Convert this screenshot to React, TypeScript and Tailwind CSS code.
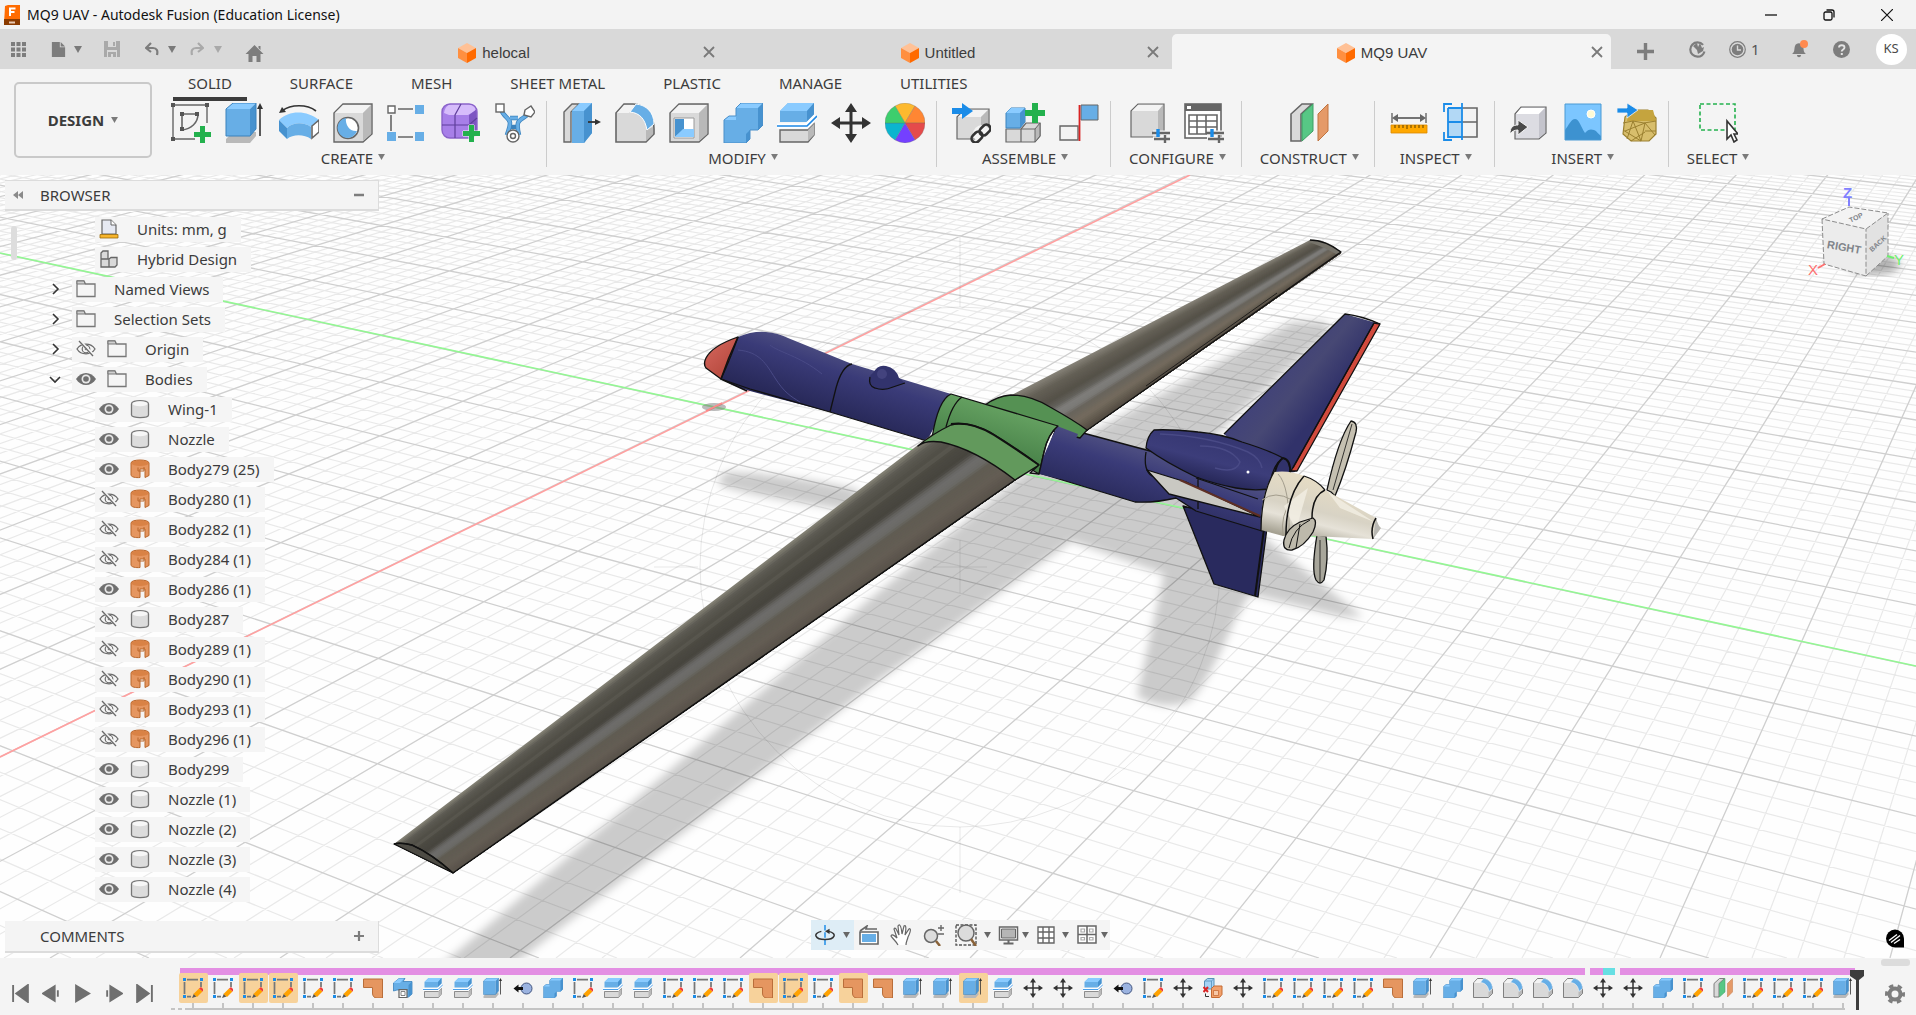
import { ReactNode, useState } from 'react';
import { clsx } from 'clsx';

interface IconProps {
  className?: string;
}

const BLUE = '#67aee6';
const BLUE_LIGHT = '#8acbff';
const BLUE_DARK = '#4792cf';
const GREY = '#d9d9d9';
const GREY_LIGHT = '#f3f3f3';
const GREY_DARK = '#b9b9b9';
const LINE = '#666666';

const Svg = ({ className, size = 40, children }: { className?: string; size?: number; children: ReactNode }) => (
  <svg viewBox={`0 0 ${size} ${size}`} className={clsx('shrink-0', className)} fill="none" aria-hidden="true">
    {children}
  </svg>
);

const Caret = ({ className = 'h-[7px] w-[8px] text-[#7a7a7a]' }: IconProps) => (
  <svg viewBox="0 0 8 7" className={clsx('shrink-0', className)} aria-hidden="true">
    <path d="M0 0H8L4 7Z" fill="currentColor" />
  </svg>
);

/* ---------- tool icons ---------- */

const Plus = ({ x, y }: { x: number; y: number }) => (
  <path
    transform={`translate(${x} ${y})`}
    d="M6 0h5v6h6v5h-6v6H6v-6H0V6h6z"
    fill="#23b14d"
    stroke="#f4f4f4"
    strokeWidth="1"
    paintOrder="stroke"
  />
);

const SketchIcon = ({ className }: IconProps) => (
  <Svg className={className}>
    <path d="M2 2H36M2 2V36M2 36H24M36 2V20" stroke={LINE} strokeWidth="1.4" />
    <path d="M11 11V26M11 11H27C27 20 20 26 11 27" stroke={LINE} strokeWidth="1.6" />
    <path d="M0 0h4v4H0zM34 0h4v4h-4zM0 34h4v4H0zM9 9h4v4H9zM24 9h4v4h-4zM9 24h4v4H9z" fill="#555" />
    <Plus x={23} y={23} />
  </Svg>
);

const ExtrudeIcon = ({ className }: IconProps) => (
  <Svg className={className}>
    <path d="M1 36L8 29H31V33L25 40H1Z" fill={GREY_DARK} />
    <path d="M1 6L8 0H31L25 6Z" fill={BLUE_LIGHT} />
    <path d="M1 6H25V33H1Z" fill={BLUE} />
    <path d="M25 6L31 0V26L25 33Z" fill={BLUE_DARK} />
    <path d="M1 6L8 0H31V26L25 33H1Z" stroke="#3b82bd" strokeWidth="1" />
    <path d="M35 33V4" stroke="#333" strokeWidth="1.6" />
    <path d="M35 0L38 6H32Z" fill="#333" />
  </Svg>
);

const RevolveIcon = ({ className }: IconProps) => (
  <Svg className={className}>
    <path d="M0 17C10 7 28 7 40 17L32 24C25 19 14 19 8 25Z" fill={BLUE_LIGHT} />
    <path d="M0 17L8 25V36L0 28Z" fill={BLUE_DARK} />
    <path d="M8 25C14 19 25 19 32 24V36C25 31 14 31 8 36Z" fill={BLUE} />
    <path d="M40 17L33 23V35L40 29Z" fill="#fff" stroke={LINE} strokeWidth="1.6" />
    <path d="M3 8C12 1 28 1 37 8" stroke="#333" strokeWidth="1.6" />
    <path d="M0 10L3 4L7 9Z" fill="#333" />
  </Svg>
);

const Cube = () => (
  <>
    <path d="M1 10L10 1H39V31L30 39H1Z" fill={GREY} stroke={LINE} strokeWidth="1.4" />
    <path d="M2 10L10 2H38L30 10Z" fill={GREY_LIGHT} />
    <path d="M30 10L38 2V31L30 38Z" fill={GREY_DARK} />
  </>
);

const HoleIcon = ({ className }: IconProps) => (
  <Svg className={className}>
    <Cube />
    <circle cx="15" cy="25" r="10.5" fill="#fff" stroke={LINE} strokeWidth="1.6" />
    <path d="M13 15A10 10 0 1 0 24 28C17 29 12 22 13 15Z" fill={BLUE} />
  </Svg>
);

const PatternIcon = ({ className }: IconProps) => (
  <Svg className={className}>
    <path d="M11 6H26M4 12V28M11 34H26" stroke={LINE} strokeWidth="1.6" />
    <path d="M1 3H8V10H1Z" fill="#fff" stroke={LINE} strokeWidth="1.4" />
    <path d="M28 2h9v9h-9zM0 29h9v9H0zM28 29h9v9h-9z" fill={BLUE} />
  </Svg>
);

const FormIcon = ({ className }: IconProps) => (
  <Svg className={className}>
    <rect x="1" y="1" width="35" height="34" rx="8" fill="#a77fe8" />
    <path d="M3 10C4 3 8 1 12 1H30C34 1 36 4 34 8L27 12H8Z" fill="#d6bcfb" />
    <path d="M28 12L36 6V26C36 30 32 33 28 34Z" fill="#7d55c2" />
    <rect x="1" y="1" width="35" height="34" rx="8" stroke="#8a63c9" strokeWidth="1.4" />
    <path d="M1 22H28L36 15M14 35V12L20 1" stroke="#5f3f9c" strokeWidth="1.2" />
    <Plus x={22} y={22} />
  </Svg>
);

const DeriveIcon = ({ className }: IconProps) => (
  <Svg className={className}>
    <path d="M6 6C8 14 15 15 15 20S13 28 12 32M24 32C23 28 22 24 23 20S30 15 34 10M15 15H23M14 24L23 24" stroke="#3b82bd" strokeWidth="4.500" />
    <path d="M6 6C8 14 15 15 15 20S13 28 12 32M24 32C23 28 22 24 23 20S30 15 34 10M15 15H23" stroke={BLUE} strokeWidth="3" />
    <rect x="1" y="1" width="8" height="8" fill="#fff" stroke={LINE} strokeWidth="1.4" />
    <path d="M30 7L36 3L40 9L36 14L29 12Z" fill="#fff" stroke={LINE} strokeWidth="1.4" />
    <circle cx="18" cy="33" r="6" fill="#fff" stroke={LINE} strokeWidth="1.4" />
    <circle cx="18" cy="33" r="2.5" stroke={LINE} strokeWidth="1.4" />
  </Svg>
);

const PressPullIcon = ({ className }: IconProps) => (
  <Svg className={className}>
    <path d="M3 9L11 1H18L10 9V39H3Z" fill={GREY} stroke={LINE} strokeWidth="1.4" />
    <path d="M11 8L19 0H31V30L23 40H11Z" fill={BLUE} />
    <path d="M11 8L19 0H31L23 8Z" fill={BLUE_LIGHT} />
    <path d="M23 8L31 0V30L23 40Z" fill={BLUE_DARK} />
    <path d="M27 19H36" stroke="#333" strokeWidth="1.8" />
    <path d="M34 16L40 19L34 22Z" fill="#333" />
  </Svg>
);

const FilletIcon = ({ className }: IconProps) => (
  <Svg className={className}>
    <path d="M1 10L9 1H18C31 1 39 12 39 26V31L31 39H1Z" fill={GREY} stroke={LINE} strokeWidth="1.6" />
    <path d="M2 10L9 2H20L14 10Z" fill={GREY_LIGHT} />
    <path d="M31 27L38 24V31L31 38Z" fill={GREY_DARK} />
    <path d="M15 9L21 1C31 2 39 9 39 21L32 27C30 16 25 10 15 9Z" fill={BLUE} stroke="#fff" strokeWidth="1" />
  </Svg>
);

const ShellIcon = ({ className }: IconProps) => (
  <Svg className={className}>
    <Cube />
    <path d="M5 15H25V35H5Z" fill="#fff" stroke="#999" strokeWidth="1" />
    <path d="M6 16H15V26L6 34Z" fill={BLUE_DARK} />
    <path d="M6 34L14 26H25V34Z" fill={BLUE_LIGHT} />
  </Svg>
);

const CombineIcon = ({ className }: IconProps) => (
  <Svg className={className}>
    <path d="M1 17L6 13H13V5L18 0H40V22L35 27H27V36L23 40H1Z" fill={BLUE} />
    <path d="M13 5L18 0H40L35 5ZM1 17L6 13H13V17Z" fill={BLUE_LIGHT} />
    <path d="M35 5L40 0V22L35 27ZM23 31L27 27V36L23 40Z" fill={BLUE_DARK} />
    <path d="M1 17L6 13H13V5L18 0H40V22L35 27H27V36L23 40H1Z" stroke="#4a8fc9" strokeWidth="1" />
  </Svg>
);

const SplitIcon = ({ className }: IconProps) => (
  <Svg className={className}>
    <path d="M3 27H31L37 21V32L31 39H3Z" fill={GREY} stroke={LINE} strokeWidth="1.4" />
    <path d="M31 27L37 21V32L31 38Z" fill={GREY_DARK} />
    <path d="M3 8L11 0H37V12L30 19H3Z" fill={BLUE} />
    <path d="M3 8L11 0H37L30 8Z" fill={BLUE_LIGHT} />
    <path d="M30 8L37 0V12L30 19Z" fill={BLUE_DARK} />
    <path d="M0 23H29L39 13" stroke="#fff" strokeWidth="5" />
    <path d="M0 23H30L40 13" stroke="#1e88e5" strokeWidth="1.6" />
  </Svg>
);

const MoveIcon = ({ className }: IconProps) => (
  <Svg className={className}>
    <path d="M20 5V35M5 20H35" stroke="#333" strokeWidth="3" />
    <path d="M20 0L26 9H14ZM20 40L14 31H26ZM0 20L9 14V26ZM40 20L31 26V14Z" fill="#333" />
  </Svg>
);

const WHEEL = [
  { d: 'M20 20L10 3A20 20 0 0 1 30 3Z', fill: '#fdb92e' },
  { d: 'M20 20L30 3A20 20 0 0 1 40 20Z', fill: '#ff8633' },
  { d: 'M20 20H40A20 20 0 0 1 30 37Z', fill: '#e54b4b' },
  { d: 'M20 20L30 37A20 20 0 0 1 10 37Z', fill: '#7440ff' },
  { d: 'M20 20L10 37A20 20 0 0 1 0 20Z', fill: '#0bb5cf' },
  { d: 'M20 20H0A20 20 0 0 1 10 3Z', fill: '#3dce6d' },
];

const AppearanceIcon = ({ className }: IconProps) => (
  <Svg className={className}>
    {WHEEL.map((slice) => (
      <path key={slice.d} d={slice.d} fill={slice.fill} stroke="#666" strokeOpacity="0.35" strokeWidth="0.8" />
    ))}
  </Svg>
);

const InsertLinkIcon = ({ className }: IconProps) => (
  <Svg className={className}>
    <path d="M6 14L14 6H38V28L30 36H6Z" fill={GREY} stroke={LINE} strokeWidth="1.2" />
    <path d="M7 14L14 7H37L30 14Z" fill={GREY_LIGHT} />
    <path d="M30 14L37 7V28L30 35Z" fill={GREY_DARK} />
    <path d="M1 5H11V0L22 8L11 16V11H1Z" fill="#1b8ce8" />
    <circle cx="31" cy="31" r="9" fill="#f4f4f4" />
    <g stroke="#333" strokeWidth="2.6">
      <rect x="20" y="30" width="12" height="8" rx="4" transform="rotate(-45 26 34)" />
      <rect x="28" y="23" width="12" height="8" rx="4" transform="rotate(-45 34 27)" />
    </g>
  </Svg>
);

const NewComponentIcon = ({ className }: IconProps) => (
  <Svg className={className}>
    <path d="M1 26H16V39H1ZM16 26L21 20H35V33L30 39H16Z" fill={GREY} stroke={LINE} strokeWidth="1.2" />
    <path d="M30 26L35 20V33L30 39ZM16 26H30" fill={GREY_DARK} stroke={LINE} strokeWidth="1" />
    <path d="M1 10L6 5H20V19L15 25H1Z" fill={BLUE} stroke="#3b82bd" strokeWidth="1" />
    <path d="M1 10L6 5H20L15 10Z" fill={BLUE_LIGHT} />
    <path d="M15 10L20 5V19L15 25Z" fill={BLUE_DARK} />
    <path d="M27 0h6v7h7v6h-7v7h-6v-7h-7V7h7z" fill="#23b14d" />
  </Svg>
);

const JointIcon = ({ className }: IconProps) => (
  <Svg className={className}>
    <path d="M1 23H19V37H1Z" fill={GREY_LIGHT} stroke={LINE} strokeWidth="1.4" />
    <path d="M22 2H39V17H22Z" fill={BLUE} stroke={LINE} strokeWidth="1" />
    <path d="M20.5 2V38" stroke="#d92323" strokeWidth="1.8" />
  </Svg>
);

const Sliders = () => (
  <>
    <path d="M23 30H40M23 36H40" stroke="#f4f4f4" strokeWidth="5" />
    <path d="M22 30H40M24 36H40" stroke={LINE} strokeWidth="2.4" />
    <path d="M28 26V34" stroke="#1b8ce8" strokeWidth="3.4" />
    <path d="M35 32V40" stroke={LINE} strokeWidth="2.4" />
  </>
);

const ConfigureIcon = ({ className }: IconProps) => (
  <Svg className={className}>
    <path d="M1 8L8 1H34V28L28 34H1Z" fill={GREY} stroke={LINE} strokeWidth="1.2" />
    <path d="M2 8L8 2H33L28 8Z" fill={GREY_LIGHT} />
    <path d="M28 8L33 2V28L28 33Z" fill={GREY_DARK} />
    <Sliders />
  </Svg>
);

const ConfigTableIcon = ({ className }: IconProps) => (
  <Svg className={className}>
    <rect x="1" y="1" width="36" height="34" fill="#fff" stroke={LINE} strokeWidth="1.6" />
    <path d="M1 1H37V8H1Z" fill={LINE} />
    <path d="M3 3h4v3H3z" fill="#fff" />
    <path d="M5 12H33V31H5ZM5 18H33M5 24H33M13 12V31M22 12V31" stroke={LINE} strokeWidth="1.6" />
    <Sliders />
  </Svg>
);

const PlaneIcon = ({ className }: IconProps) => (
  <Svg className={className}>
    <path d="M2 11L13 1H23L12 11V38H2Z" fill={GREY} stroke={LINE} strokeWidth="1.6" />
    <path d="M13 11L24 1V28L13 38Z" fill="#57c785" stroke="#3c9e62" strokeWidth="1" />
    <path d="M29 11L39 1V28L29 38Z" fill="#e59a68" stroke="#c07440" strokeWidth="1" />
  </Svg>
);

const MeasureIcon = ({ className }: IconProps) => (
  <Svg className={className}>
    <path d="M3 10V20M37 10V20" stroke={LINE} strokeWidth="1.4" />
    <path d="M7 15H33" stroke={LINE} strokeWidth="1.8" />
    <path d="M3 15L9 11V19ZM37 15L31 19V11Z" fill={LINE} />
    <path d="M2 22H38V30H2Z" fill="#ffa800" stroke="#d98900" strokeWidth="0.8" />
    <path d="M6 22v3M10 22v3M14 22v3M18 22v4M22 22v3M26 22v3M30 22v3M34 22v3" stroke="#7a5200" strokeWidth="1.2" />
  </Svg>
);

const SectionIcon = ({ className }: IconProps) => (
  <Svg className={className}>
    <path d="M5 5H19V34H5Z" fill="#b2d8f5" />
    <path d="M19 5H34V34H19M19 19H34" fill={GREY_LIGHT} stroke={LINE} strokeWidth="1.6" />
    <path d="M19 0V37M1 9V1H9M1 29V37H9M5 5H19M5 5V34H19M5 19H19" stroke="#1b8ce8" strokeWidth="1.8" />
  </Svg>
);

const InsertDerivedIcon = ({ className }: IconProps) => (
  <Svg className={className}>
    <path d="M6 11L12 4H37V30L30 36H6Z" fill="#dcdce2" stroke={LINE} strokeWidth="1.2" />
    <path d="M7 11L12 5H36L30 11Z" fill="#ffffff" />
    <path d="M30 11L36 5V30L30 35Z" fill="#c4c4cc" />
    <path d="M1 31C1 24 4 22 9 22V17L19 24L9 32V27C6 27 3 28 1 31Z" fill="#4a4a4a" stroke="#f4f4f4" strokeWidth="1" />
  </Svg>
);

const CanvasIcon = ({ className }: IconProps) => (
  <Svg className={className}>
    <path d="M2 1H38V37H2Z" fill="#7cc6ff" />
    <circle cx="28" cy="11" r="4" fill="#fffbd6" stroke="#fff" />
    <path d="M2 27C6 22 8 16 12 16S18 24 22 30C25 26 28 26 31 27S35 31 38 33V37H2Z" fill="#3d92d0" />
    <path d="M2 1H38V37H2Z" stroke="#4a9ad4" strokeWidth="1" />
  </Svg>
);

const MeshInsertIcon = ({ className }: IconProps) => (
  <Svg className={className}>
    <path d="M8 14L16 7H31L39 15V31L32 38H14L6 31Z" fill="#d8be6c" stroke="#9b8030" strokeWidth="1.2" />
    <path d="M12 7H36L39 18H10Z" fill="#c5a43e" />
    <path d="M6 20L16 18L27 20L39 18M16 18L10 36M16 18L24 38L28 20L38 32M6 27L24 38M8 28L28 20M28 28H39M14 38L28 29" stroke="#9b8030" strokeWidth="1" />
    <path d="M0 5H10V0L21 7L10 15V10H0Z" fill="#1b8ce8" stroke="#f4f4f4" strokeWidth="0.8" />
  </Svg>
);

const SelectIcon = ({ className }: IconProps) => (
  <Svg className={className}>
    <rect x="2" y="1" width="35" height="26" stroke="#23b14d" strokeWidth="1.6" strokeDasharray="4 2.5" />
    <path d="M29 18V36L33 32L36 39L39 37L36 31H40Z" fill="#fff" stroke="#333" strokeWidth="1.6" />
  </Svg>
);

/* ---------- timeline icons ---------- */

const SketchPencilIcon = ({ className }: IconProps) => (
  <Svg className={className}>
    <path d="M8 3H30M3 8V32M8 37H16M36 8V18" stroke="#777" strokeWidth="3.5" />
    <path d="M0 0h6v6H0zM34 0h6v6h-6zM0 34h6v6H0z" fill="#1b8ce8" />
    <path d="M18 40L22 31L27 37Z" fill="#555" />
    <path d="M21 32L32 21L39 27L28 38Z" fill="#ffa200" />
    <path d="M32 21L36 18L42 24L39 27Z" fill="#f23b3b" />
  </Svg>
);

const PatchIcon = ({ className }: IconProps) => (
  <Svg className={className}>
    <path d="M1 2H39V40H28C22 40 19 36 19 30V19H1Z" fill="#e59660" stroke="#b96e3a" strokeWidth="2" />
  </Svg>
);

const IntersectIcon = ({ className }: IconProps) => (
  <Svg className={className}>
    <path d="M1 10L12 1H24L20 7H38V32L31 38H20V24H8L1 26Z" fill={BLUE} stroke="#3b82bd" strokeWidth="1.6" />
    <path d="M1 10L12 1H22L14 10Z" fill={BLUE_LIGHT} />
    <path d="M31 14L38 7V32L31 38Z" fill={BLUE_DARK} />
    <path d="M12 23H28V39H12Z" fill="#fff" stroke={LINE} strokeWidth="2.5" />
    <path d="M16 27H24V35H16Z" stroke={LINE} strokeWidth="1.6" />
  </Svg>
);

const AlignIcon = ({ className }: IconProps) => (
  <Svg className={className}>
    <circle cx="27" cy="21" r="11" fill="#9bb3e0" stroke="#43557f" strokeWidth="2" />
    <path d="M1 21L11 13V18H20V24H11V29Z" fill="#111" />
  </Svg>
);

const RemoveIcon = ({ className }: IconProps) => (
  <Svg className={className}>
    <path d="M3 6L9 1H22V18L17 22H3Z" fill="#a6d3f5" stroke="#5791b8" strokeWidth="2" />
    <path d="M3 6H17V22M17 6L22 1" stroke="#5791b8" strokeWidth="1.6" />
    <path d="M17 21L22 16H38V33L33 39H17Z" fill="#f2a16c" stroke="#c46a33" strokeWidth="2" />
    <path d="M21 25H31V35H21Z" fill="#f8c9a8" stroke="#c46a33" strokeWidth="1.5" />
    <path d="M1 18L10 28M10 18L1 28" stroke="#d92323" strokeWidth="4" />
    <path d="M5 31V37H12" stroke="#333" strokeWidth="2" />
  </Svg>
);

/* ---------- browser icons ---------- */

const EyeIcon = () => (
  <Svg className="h-[20px] w-[20px]" size={20}>
    <path d="M0 10C5 2 15 2 20 10C15 18 5 18 0 10Z" fill="#6f6f6f" />
    <circle cx="10" cy="10" r="4.5" fill="#e8e8e8" />
    <circle cx="10" cy="10" r="2.8" fill="#6f6f6f" />
  </Svg>
);

const EyeOffIcon = () => (
  <Svg className="h-[20px] w-[20px]" size={20}>
    <path d="M1 10C5 3.5 15 3.5 19 10C15 16.5 5 16.5 1 10Z" stroke="#6b6b6b" strokeWidth="1.3" />
    <circle cx="10" cy="10" r="3.8" stroke="#6b6b6b" strokeWidth="1.2" />
    <circle cx="10" cy="10" r="1.3" fill="#6b6b6b" />
    <path d="M4 2L18 17" stroke="#f5f5f5" strokeWidth="3" />
    <path d="M3 2L17 17" stroke="#6b6b6b" strokeWidth="1.3" />
  </Svg>
);

const FolderIcon = () => (
  <Svg className="h-[20px] w-[20px]" size={20}>
    <path d="M1 2H8L9.5 5H19V17.5H1Z" fill="#f5f5f5" stroke="#777" strokeWidth="1.3" />
    <path d="M1 2H8L9 5H1Z" fill="#cfcfcf" stroke="#777" strokeWidth="1" />
  </Svg>
);

const BodyIcon = () => (
  <Svg className="h-[20px] w-[20px]" size={20}>
    <path d="M1.5 5C1.5 0.5 18.5 0.5 18.5 5V16C18.5 19.5 1.5 19.5 1.5 16Z" fill="#dcdcdc" stroke="#777" strokeWidth="1.3" />
    <ellipse cx="10" cy="4.8" rx="7.5" ry="2.5" fill="#f7f7f7" />
  </Svg>
);

const SurfaceIcon = () => (
  <Svg className="h-[20px] w-[20px]" size={20}>
    <path d="M1 4C1 0 19 0 19 4V16.5L15 18.5V10H10V18.5C6 19 1 18 1 16Z" fill="#e59660" stroke="#b9662b" strokeWidth="1" />
    <ellipse cx="10" cy="4.2" rx="8.5" ry="2.8" fill="#d98245" />
    <path d="M8 8.500V12H14V8" stroke="#b9662b" strokeWidth="1" />
  </Svg>
);

const UnitsIcon = () => (
  <Svg className="h-[20px] w-[20px]" size={20}>
    <path d="M3 1H12L17 6V15H3Z" fill="#e6e9f2" stroke="#666" strokeWidth="1.2" />
    <path d="M12 1V6H17" fill="#fff" stroke="#666" strokeWidth="1" />
    <path d="M1 15.5H19V19H1Z" fill="#f7b52c" stroke="#9a6b0a" strokeWidth="0.8" />
  </Svg>
);

const HybridIcon = () => (
  <Svg className="h-[20px] w-[20px]" size={20}>
    <path d="M2 4L4 2H9V10H2ZM2 10H10V18H2ZM10 10L12 8.5H18V16L16 18H10Z" fill="#d9d9d9" stroke="#666" strokeWidth="1.3" />
  </Svg>
);

const ComponentIcon = () => (
  <svg viewBox="0 0 18 20" className="h-[20px] w-[18px] shrink-0" aria-hidden="true">
    <path d="M9 0L18 5L9 10L0 5Z" fill="#ffc196" />
    <path d="M0 5L9 10V20L0 15Z" fill="#ff8f40" />
    <path d="M18 5L9 10V20L18 15Z" fill="#ff6a00" />
  </svg>
);

/* ---------- title bar ---------- */

const TitleBar = () => (
  <header className="flex h-[29px] shrink-0 items-center bg-[#f3f3f3] pl-[3px] text-[#111]">
    <svg viewBox="0 0 18 20" className="h-[20px] w-[18px]" aria-hidden="true">
      <path d="M2 1L5 0H17V19H1Z" fill="#ff6b00" />
      <path d="M1 14H17V20H1Z" fill="#8b3b00" />
      <path d="M7 11V3.5H12.5M7 7H11.5" stroke="#fff" strokeWidth="2" fill="none" />
      <path d="M6 17.5H12" stroke="#e9c9b0" strokeWidth="2" />
    </svg>
    <h1 className="ml-[6px] flex-1 text-[14px]">MQ9 UAV - Autodesk Fusion (Education License)</h1>
    <div className="flex">
      <button aria-label="Minimise" className="flex h-[29px] w-[58px] items-center justify-center">
        <svg viewBox="0 0 12 12" className="h-3 w-3"><path d="M0 6H12" stroke="#111" strokeWidth="1.3" /></svg>
      </button>
      <button aria-label="Restore" className="flex h-[29px] w-[58px] items-center justify-center">
        <svg viewBox="0 0 12 12" className="h-3 w-3" fill="none" stroke="#111" strokeWidth="1.3">
          <rect x="1" y="3" width="8" height="8" rx="1.5" />
          <path d="M3.5 1H9Q11 1 11 3V8.5" />
        </svg>
      </button>
      <button aria-label="Close" className="flex h-[29px] w-[58px] items-center justify-center">
        <svg viewBox="0 0 12 12" className="h-3 w-3"><path d="M0 0L12 12M12 0L0 12" stroke="#111" strokeWidth="1.2" /></svg>
      </button>
    </div>
  </header>
);

/* ---------- document tabs ---------- */

const DOCUMENTS = ['helocal', 'Untitled', 'MQ9 UAV'];

const QuickAccess = () => (
  <div className="flex w-[284px] shrink-0 items-center text-[#7d7d7d]">
    <button aria-label="Show data panel" className="ml-[11px]">
      <Svg className="h-[15px] w-[15px]" size={15}>
        <path d="M0 0h4v4H0zM5.5 0h4v4h-4zM11 0h4v4h-4zM0 5.5h4v4H0zM5.5 5.5h4v4h-4zM11 5.5h4v4h-4zM0 11h4v4H0zM5.5 11h4v4h-4zM11 11h4v4h-4z" fill="currentColor" />
      </Svg>
    </button>
    <button aria-label="File" className="ml-[25px] flex items-center gap-[8px]">
      <Svg className="h-[17px] w-[15px]" size={17}>
        <path d="M1 0H10V6H16V17H1ZM11 0L16 5H11Z" fill="currentColor" />
      </Svg>
      <Caret />
    </button>
    <button aria-label="Save" className="ml-[22px] text-[#a9a9a9]">
      <Svg className="h-[16px] w-[16px]" size={16}>
        <path d="M0 0H16V16H0Z" fill="currentColor" />
        <path d="M4 0H12V6H4ZM3 9H13V16H3Z" fill="#d9d9d9" />
        <path d="M9 1H11V5H9ZM4 11H12V16H9V13H7V16H4Z" fill="currentColor" />
      </Svg>
    </button>
    <button aria-label="Undo" className="ml-[25px] flex items-center gap-[9px]">
      <Svg className="h-[14px] w-[14px]" size={14}>
        <path d="M1 6H8C12 6 13 9 12 13M6 1L1 6L6 10" stroke="currentColor" strokeWidth="2.2" />
      </Svg>
      <Caret />
    </button>
    <button aria-label="Redo" className="ml-[14px] flex items-center gap-[10px] text-[#a9a9a9]">
      <Svg className="h-[14px] w-[14px]" size={14}>
        <path d="M13 6H6C2 6 1 9 2 13M8 1L13 6L8 10" stroke="currentColor" strokeWidth="2.2" />
      </Svg>
      <Caret className="h-[7px] w-[8px]" />
    </button>
    <button aria-label="Home" className="mt-[8px] ml-[23px]">
      <Svg className="h-[18px] w-[19px]" size={18}>
        <path d="M9 1L18 10H15V18H11V12H7V18H3V10H0ZM13 2H15V6L13 4Z" fill="currentColor" />
      </Svg>
    </button>
  </div>
);

const DocumentBar = () => {
  const [active, setActive] = useState('MQ9 UAV');

  return (
    <div className="flex h-[40px] shrink-0 bg-[#d9d9d9]">
      <QuickAccess />
      <div className="flex flex-1 items-end gap-[5px]">
        {DOCUMENTS.map((name) => (
          <div
            key={name}
            className={clsx(
              'flex h-[35px] flex-1 items-center rounded-t-[5px] pt-[1px] pr-[5px]',
              active === name && 'bg-[#f4f4f4]',
            )}
          >
            <button
              onClick={() => setActive(name)}
              className="flex flex-1 items-center justify-center gap-[6px] pt-[2px] pl-[4px] font-['Liberation_Sans',sans-serif] text-[15px] text-[#3c3c3c]"
            >
              <ComponentIcon />
              {name}
            </button>
            <button aria-label={`Close ${name}`} className="flex w-[18px] justify-center">
              <svg viewBox="0 0 12 12" className="h-[12px] w-[12px]"><path d="M1 1L11 11M11 1L1 11" stroke="#7a7a7a" strokeWidth="1.8" /></svg>
            </button>
          </div>
        ))}
      </div>
      <div className="flex w-[305px] shrink-0 items-center text-[#7d7d7d]">
        <button aria-label="New design" className="mt-[4px] ml-[26px]">
          <svg viewBox="0 0 17 17" className="h-[17px] w-[17px]"><path d="M8.5 0V17M0 8.5H17" stroke="currentColor" strokeWidth="3.4" /></svg>
        </button>
        <button aria-label="Extensions" className="ml-[35px]">
          <Svg className="h-[17px] w-[17px]" size={17}>
            <circle cx="8.5" cy="8.5" r="7.2" stroke="currentColor" strokeWidth="2.2" strokeDasharray="38 7" strokeDashoffset="-2" />
            <path d="M4 5L8 2L9 6L11 2L13 7L15 6L14 10L9 13L8 9Z" fill="currentColor" />
          </Svg>
        </button>
        <button aria-label="Job status" className="ml-[23px] flex items-center gap-[5px] text-[15px] text-[#555]">
          <Svg className="h-[17px] w-[17px]" size={17}>
            <circle cx="8.5" cy="8.5" r="7.8" stroke="#7d7d7d" strokeWidth="1.2" />
            <circle cx="8.5" cy="8.5" r="5.8" fill="#7d7d7d" />
            <path d="M8.5 4.5V9H12" stroke="#d9d9d9" strokeWidth="1.4" />
          </Svg>
          1
        </button>
        <button aria-label="Notifications" className="ml-[31px]">
          <Svg className="h-[18px] w-[18px]" size={18}>
            <path d="M1 14C4 12 3 9 4 6C5 3 10 2 12 6C13 9 12 12 15 14ZM6 15H10C10 18 6 18 6 15Z" fill="currentColor" />
            <circle cx="13" cy="4" r="4" fill="#ff8a4f" />
          </Svg>
        </button>
        <button aria-label="Help" className="ml-[24px]">
          <Svg className="h-[17px] w-[17px]" size={17}>
            <circle cx="8.5" cy="8.5" r="8.5" fill="currentColor" />
            <path d="M6 6.5C6 3.5 11.5 3.5 11.5 6.5C11.5 8.5 8.7 8.3 8.7 10.5" stroke="#e4e4e4" strokeWidth="1.8" />
            <path d="M7.8 12H9.8V14H7.8Z" fill="#e4e4e4" />
          </Svg>
        </button>
        <button aria-label="Account" className="ml-[26px] flex h-[31px] w-[31px] items-center justify-center rounded-full bg-white text-[13px] text-[#4a4a4a]">
          KS
        </button>
      </div>
    </div>
  );
};

/* ---------- ribbon ---------- */

const WORKSPACE_TABS = ['SOLID', 'SURFACE', 'MESH', 'SHEET METAL', 'PLASTIC', 'MANAGE', 'UTILITIES'];

type Icon = (props: IconProps) => ReactNode;

const GROUPS: { name: string; tools: { label: string; icon: Icon }[] }[] = [
  {
    name: 'CREATE',
    tools: [
      { label: 'Create Sketch', icon: SketchIcon },
      { label: 'Extrude', icon: ExtrudeIcon },
      { label: 'Revolve', icon: RevolveIcon },
      { label: 'Hole', icon: HoleIcon },
      { label: 'Rectangular Pattern', icon: PatternIcon },
      { label: 'Create Form', icon: FormIcon },
      { label: 'Automated Modeling', icon: DeriveIcon },
    ],
  },
  {
    name: 'MODIFY',
    tools: [
      { label: 'Press Pull', icon: PressPullIcon },
      { label: 'Fillet', icon: FilletIcon },
      { label: 'Shell', icon: ShellIcon },
      { label: 'Combine', icon: CombineIcon },
      { label: 'Split Body', icon: SplitIcon },
      { label: 'Move', icon: MoveIcon },
      { label: 'Appearance', icon: AppearanceIcon },
    ],
  },
  {
    name: 'ASSEMBLE',
    tools: [
      { label: 'Insert Component', icon: InsertLinkIcon },
      { label: 'New Component', icon: NewComponentIcon },
      { label: 'Joint', icon: JointIcon },
    ],
  },
  {
    name: 'CONFIGURE',
    tools: [
      { label: 'Configure', icon: ConfigureIcon },
      { label: 'Configuration Table', icon: ConfigTableIcon },
    ],
  },
  { name: 'CONSTRUCT', tools: [{ label: 'Offset Plane', icon: PlaneIcon }] },
  {
    name: 'INSPECT',
    tools: [
      { label: 'Measure', icon: MeasureIcon },
      { label: 'Section Analysis', icon: SectionIcon },
    ],
  },
  {
    name: 'INSERT',
    tools: [
      { label: 'Insert Derive', icon: InsertDerivedIcon },
      { label: 'Canvas', icon: CanvasIcon },
      { label: 'Insert Mesh', icon: MeshInsertIcon },
    ],
  },
  { name: 'SELECT', tools: [{ label: 'Select', icon: SelectIcon }] },
];

const Ribbon = () => {
  const [tab, setTab] = useState('SOLID');

  return (
    <div className="flex h-[106px] shrink-0 bg-[#f4f4f4] text-[15px] text-[#3c3c3c]">
      <button className="mt-[13px] ml-[14px] flex h-[76px] w-[138px] items-center justify-center gap-[7px] rounded-[5px] border-2 border-[#c9c9c9] text-[15px] font-bold">
        DESIGN
        <Caret className="h-[6px] w-[7px] text-[#7a7a7a]" />
      </button>
      <div className="flex flex-col">
        <nav className="ml-[21px] flex h-[32px] gap-[28px]">
          {WORKSPACE_TABS.map((name) => (
            <button
              key={name}
              onClick={() => setTab(name)}
              className={clsx(
                'border-b-4 px-[15px] leading-[22px]',
                tab === name ? 'border-[#3c3c3c]' : 'border-transparent',
              )}
            >
              {name}
            </button>
          ))}
        </nav>
        <div className="ml-[5px] flex h-[66px]">
          {GROUPS.map((group) => (
            <section key={group.name} className="flex flex-col items-center border-r border-[#cccccc] pr-[4px] pl-[7px] last:border-r-0">
              <div className="mt-[2px] flex h-[40px]">
                {group.tools.map(({ label, icon: ToolIcon }) => (
                  <button key={label} aria-label={label} className="flex w-[54px] justify-center">
                    <ToolIcon className="h-[40px] w-[40px]" />
                  </button>
                ))}
              </div>
              <button className="mt-[5px] flex items-center gap-[5px] px-[11px] leading-[20px]">
                {group.name}
                <Caret className="mb-[3px] h-[6px] w-[7px] text-[#7a7a7a]" />
              </button>
            </section>
          ))}
        </div>
      </div>
    </div>
  );
};

/* ---------- browser tree ---------- */

interface TreeNode {
  name: string;
  kind: 'units' | 'hybrid' | 'folder' | 'body' | 'surface';
  visible?: boolean;
  open?: boolean;
}

const TREE: TreeNode[] = [
  { name: 'Units: mm, g', kind: 'units' },
  { name: 'Hybrid Design', kind: 'hybrid' },
  { name: 'Named Views', kind: 'folder' },
  { name: 'Selection Sets', kind: 'folder' },
  { name: 'Origin', kind: 'folder', visible: false },
  { name: 'Bodies', kind: 'folder', visible: true, open: true },
  { name: 'Wing-1', kind: 'body', visible: true },
  { name: 'Nozzle', kind: 'body', visible: true },
  { name: 'Body279 (25)', kind: 'surface', visible: true },
  { name: 'Body280 (1)', kind: 'surface', visible: false },
  { name: 'Body282 (1)', kind: 'surface', visible: false },
  { name: 'Body284 (1)', kind: 'surface', visible: false },
  { name: 'Body286 (1)', kind: 'surface', visible: true },
  { name: 'Body287', kind: 'body', visible: false },
  { name: 'Body289 (1)', kind: 'surface', visible: false },
  { name: 'Body290 (1)', kind: 'surface', visible: false },
  { name: 'Body293 (1)', kind: 'surface', visible: false },
  { name: 'Body296 (1)', kind: 'surface', visible: false },
  { name: 'Body299', kind: 'body', visible: true },
  { name: 'Nozzle (1)', kind: 'body', visible: true },
  { name: 'Nozzle (2)', kind: 'body', visible: true },
  { name: 'Nozzle (3)', kind: 'body', visible: true },
  { name: 'Nozzle (4)', kind: 'body', visible: true },
];

const NODE_ICONS = {
  units: UnitsIcon,
  hybrid: HybridIcon,
  folder: FolderIcon,
  body: BodyIcon,
  surface: SurfaceIcon,
};

const TreeRow = ({ node }: { node: TreeNode }) => {
  const NodeIcon = NODE_ICONS[node.kind];
  const isFolder = node.kind === 'folder';

  return (
    <li className={clsx('flex h-[30px] items-center', isFolder ? 'pl-[42px]' : 'pl-[90px]')}>
      {isFolder && (
        <button aria-label={`Toggle ${node.name}`} className="mr-[9px] flex w-[16px] justify-center">
          <svg viewBox="0 0 12 12" className={clsx('h-[12px] w-[12px]', node.open && 'rotate-90')} fill="none">
            <path d="M4 1L9 6L4 11" stroke="#333" strokeWidth="1.6" />
          </svg>
        </button>
      )}
      <div className="flex h-[25px] items-center bg-[#f5f5f5] pr-[14px] pl-[4px]">
        {node.visible !== undefined && (
          <button aria-label={`${node.visible ? 'Hide' : 'Show'} ${node.name}`} className="mr-[11px]">
            {node.visible ? <EyeIcon /> : <EyeOffIcon />}
          </button>
        )}
        <NodeIcon />
        <span className="ml-[18px] leading-[24px] whitespace-nowrap">{node.name}</span>
      </div>
    </li>
  );
};

const BrowserPanel = () => (
  <aside className="flex w-[374px] flex-col text-[15px] text-[#3c3c3c]">
    <div className="flex h-[31px] items-center border-t border-r border-b-2 border-[#dcdcdc] bg-[#f4f4f4] pr-[14px] pl-[8px]">
      <button aria-label="Collapse browser">
        <svg viewBox="0 0 10 8" className="h-[8px] w-[10px]"><path d="M5 0V8L0 4ZM10 0V8L5 4Z" fill="#8a8a8a" /></svg>
      </button>
      <h2 className="ml-[17px] flex-1">BROWSER</h2>
      <button aria-label="Minimise browser">
        <svg viewBox="0 0 10 10" className="h-[10px] w-[10px]"><path d="M0 5H10" stroke="#7d7d7d" strokeWidth="2.5" /></svg>
      </button>
    </div>
    <div className="relative mt-[3px]">
      <div className="absolute top-[12px] left-[6px] h-[34px] w-[6px] rounded-[3px] bg-[#dddddd]" />
      <ul>
        {TREE.map((node) => (
          <TreeRow key={node.name} node={node} />
        ))}
      </ul>
    </div>
    <div className="mt-auto flex h-[32px] items-center border-r border-b-2 border-[#dcdcdc] bg-[#f4f4f4] pr-[14px] pl-[35px]">
      <h2 className="flex-1">COMMENTS</h2>
      <button aria-label="Add comment">
        <svg viewBox="0 0 10 10" className="h-[10px] w-[10px]"><path d="M0 5H10M5 0V10" stroke="#7d7d7d" strokeWidth="2.2" /></svg>
      </button>
    </div>
  </aside>
);

/* ---------- navigation bar ---------- */

const NavigationBar = () => (
  <div className="flex h-[30px] w-[299px] items-center bg-[#f4f4f4]">
    <button aria-label="Orbit" className="flex h-[30px] w-[43px] items-center gap-[8px] bg-[#deedf6] pl-[4px]">
      <Svg className="h-[22px] w-[20px]" size={22}>
        <path d="M11 0V6M11 8V14M11 16V22" stroke="#1b8ce8" strokeWidth="1.6" />
        <path d="M15 7C25 9 22 16 11 16S-3 9 7 7" stroke="#333" strokeWidth="1.6" />
        <path d="M16 4V10L11 7Z" fill="#333" />
      </Svg>
      <Caret className="h-[6px] w-[7px] text-[#666]" />
    </button>
    <button aria-label="Look at" className="ml-[5px]">
      <Svg className="h-[20px] w-[20px]" size={20}>
        <path d="M1 7H19V19H1Z" fill="#fff" stroke="#666" strokeWidth="1.6" />
        <path d="M3 9H17V17H3Z" fill={BLUE} />
        <path d="M1 6L8 1L7 4H18" stroke="#666" strokeWidth="1.6" />
      </Svg>
    </button>
    <button aria-label="Pan" className="ml-[11px]">
      <Svg className="h-[22px] w-[22px]" size={22}>
        <path d="M8 21C6 17 2 14 1 12C2 10 4 11 7 14L4 5C5 3 6 4 9 11L8 2C9 0 11 0 12 10L14 2C15 1 17 1 15 11L19 5C20 4 22 5 18 13C17 17 16 18 16 21" fill="#fff" stroke="#666" strokeWidth="1.2" />
      </Svg>
    </button>
    <button aria-label="Zoom" className="ml-[11px]">
      <Svg className="h-[22px] w-[22px]" size={22}>
        <circle cx="8" cy="12" r="6.5" fill="#dcdcdc" stroke="#666" strokeWidth="1.5" />
        <path d="M13 17L17 22" stroke="#8a6238" strokeWidth="2.5" />
        <path d="M18 1V7M15 4H21M15 10H21" stroke="#666" strokeWidth="1.4" />
      </Svg>
    </button>
    <button aria-label="Fit" className="ml-[10px] flex items-center gap-[7px]">
      <Svg className="h-[22px] w-[22px]" size={22}>
        <rect x="1" y="1" width="20" height="20" stroke="#555" strokeWidth="1.4" strokeDasharray="3 1.5" />
        <circle cx="11" cy="9" r="8" fill="#dcdcdc" stroke="#666" strokeWidth="1.5" />
        <path d="M16 15L21 22" stroke="#8a6238" strokeWidth="2.5" />
      </Svg>
      <Caret className="h-[6px] w-[7px] text-[#666]" />
    </button>
    <button aria-label="Display settings" className="ml-[7px] flex items-center gap-[3px]">
      <Svg className="h-[20px] w-[21px]" size={20}>
        <path d="M1 2H19V15H1Z" fill="#fff" stroke="#666" strokeWidth="1.5" />
        <path d="M3 4H17V13H3Z" fill="#b5b5b5" stroke="#666" strokeWidth="1" />
        <path d="M5 18.5H15M10 15V18" stroke="#666" strokeWidth="2" />
      </Svg>
      <Caret className="h-[6px] w-[7px] text-[#666]" />
    </button>
    <button aria-label="Grid and snaps" className="ml-[8px] flex items-center gap-[7px]">
      <Svg className="h-[18px] w-[18px]" size={18}>
        <path d="M1 1H17V17H1ZM6 1V17M12 1V17M1 6H17M1 12H17" stroke="#666" strokeWidth="1.4" fill="#fff" />
      </Svg>
      <Caret className="h-[6px] w-[7px] text-[#666]" />
    </button>
    <button aria-label="Viewports" className="ml-[8px] flex items-center gap-[4px]">
      <Svg className="h-[20px] w-[20px]" size={20}>
        <path d="M1 1H19V18H1ZM10 1V18M1 9.5H19" stroke="#666" strokeWidth="1.5" fill="#fff" />
        <path d="M4 4H7.5V7H4ZM12.5 4H16V7H12.5ZM4 12.5H7.5V15H4ZM12.5 12.5H16V15H12.5Z" stroke="#aaa" strokeWidth="1.2" />
      </Svg>
      <Caret className="h-[6px] w-[7px] text-[#666]" />
    </button>
  </div>
);

/* ---------- 3D view ---------- */

// vanishing points of the two grid directions, and where the grid meets the bottom edge
const VP_X = { x: 2242, y: -342 };
const VP_Y = { x: -2762, y: -342 };
const FLOOR = 958;

const range = (from: number, to: number) => Array.from({ length: to - from + 1 }, (_, i) => from + i);

const gridPath = (vp: { x: number; y: number }, start: number, step: number, from: number, to: number, major: boolean) =>
  range(from, to)
    .filter((k) => (k % 5 === 0) === major)
    .map((k) => `M${vp.x} ${vp.y}L${(start + step * k).toFixed(1)} ${FLOOR}`)
    .join('');

const GRID_MINOR = gridPath(VP_X, -410, 46, -66, 56, false) + gridPath(VP_Y, 3269, -78, -76, 44, false);
const GRID_MAJOR = gridPath(VP_X, -410, 46, -66, 56, true) + gridPath(VP_Y, 3269, -78, -76, 44, true);

type Point = [number, number];

const lerp = (a: number, b: number, t: number) => a + (b - a) * t;

const mix = (stops: [number, number[]][], t: number) => {
  const i = Math.max(1, stops.findIndex(([at]) => at >= t));
  const [t0, c0] = stops[i - 1];
  const [t1, c1] = stops[i];
  const f = (t - t0) / (t1 - t0);
  return `rgb(${c0.map((c, n) => Math.round(lerp(c, c1[n], f))).join(',')})`;
};

const WING_NEAR: [number, number[]][] = [
  [0, [128, 126, 114]],
  [0.08, [92, 90, 82]],
  [0.2, [80, 78, 70]],
  [0.24, [92, 90, 82]],
  [0.28, [76, 74, 66]],
  [0.42, [70, 68, 62]],
  [0.48, [98, 97, 93]],
  [0.52, [109, 108, 106]],
  [0.6, [108, 107, 104]],
  [0.66, [96, 92, 82]],
  [0.82, [100, 93, 84]],
  [1, [86, 80, 72]],
];

const WING_FAR: [number, number[]][] = [
  [0, [132, 128, 118]],
  [0.15, [100, 96, 86]],
  [0.35, [84, 81, 72]],
  [0.45, [98, 96, 90]],
  [0.52, [126, 125, 122]],
  [0.6, [124, 123, 120]],
  [0.66, [104, 100, 92]],
  [0.8, [116, 107, 94]],
  [1, [78, 71, 62]],
];

// a tapered wing panel, shaded by strips running along the span
const Wing = ({ tip, root, stops }: { tip: [Point, Point]; root: [Point, Point]; stops: [number, number[]][] }) => (
  <g>
    {range(0, 39).map((i) => {
      const t = i / 39.5;
      const a = [lerp(tip[0][0], tip[1][0], t), lerp(tip[0][1], tip[1][1], t)];
      const b = [lerp(root[0][0], root[1][0], t), lerp(root[0][1], root[1][1], t)];
      return <path key={i} d={`M${a}L${b}L${root[1]}L${tip[1]}Z`} fill={mix(stops, t)} />;
    })}
  </g>
);

const Aircraft = () => (
  <g stroke="#111" strokeWidth="1.3" strokeLinejoin="round">
    {/* far wing */}
    <g stroke="none">
      <Wing tip={[[1310, 240], [1341, 253]]} root={[[1002, 400], [1086, 431]]} stops={WING_FAR} />
    </g>
    <path d="M1310 240Q1325 238 1341 252L1336 254Q1322 246 1308 242Z" fill="#77746b" stroke="none" />
    <path d="M1310 240Q1325 240 1341 252L1086 431" fill="none" />
    <path d="M1277 293L1146 386" fill="none" strokeWidth="0.8" />

    {/* right tail fin */}
    <path d="M1345 314L1380 324L1295 472L1270 475L1224 434Z" fill="url(#fin)" stroke="none" />
    <path d="M1374 323L1380 324L1297 471L1291 471Z" fill="#d14a3d" />
    <path d="M1224 434L1345 314Q1362 316 1380 324M1374 323L1293 468" fill="none" />

    {/* lower fin */}
    <path d="M1183 506L1214 584L1258 597L1267 528Z" fill="#292a5e" />
    <path d="M1255 596L1264 529" fill="none" strokeWidth="2" />

    {/* fuselage */}
    <path d="M1057 426L1150 451L1272 482L1262 531L1196 511L1176 498Q1155 503 1135 502L1039 473Z" fill="url(#body)" />
    <path
      d="M738 337Q752 331 766 332Q778 333 788 338L852 364L951 394L927 441L830 412L750 391Q733 386 721 379Z"
      fill="url(#body)"
      stroke="none"
    />
    <path d="M721 379L750 389L830 412L927 441" fill="none" />
    <path d="M738 350C760 352 766 364 775 378S790 396 800 402M770 345C778 352 800 356 822 374" fill="none" stroke="#494a86" strokeWidth="1" />
    <path d="M852 364Q842 366 836 388L830 412" fill="none" />
    <path d="M738 337Q712 346 706 358Q703 364 706 368L721 379Q731 357 738 337Z" fill="url(#nose)" />
    <path d="M738 337Q728 358 721 379L747 391" fill="none" strokeWidth="1.6" />
    <path d="M870 383Q868 376 873 373Q878 364 886 366Q896 368 899 378L905 383L893 387Q884 390 875 388Q871 387 870 383Z" fill="#32336d" stroke="none" />
    <path d="M870 377Q868 386 875 388Q884 391 893 387L905 383" fill="none" />
    <circle cx="882" cy="374" r="5" fill="#5c5d98" stroke="none" opacity="0.4" />

    {/* near wing */}
    <g stroke="none">
      <Wing tip={[[394, 844], [453, 873]]} root={[[935, 432], [1034, 467]]} stops={WING_NEAR} />
    </g>
    <path d="M394 844Q400 842 412 845Q432 854 453 873Z" fill="#4d4b44" />
    <path d="M394 844Q400 842 412 845Q432 854 453 873L1015 480" fill="none" strokeWidth="1.5" />

    {/* centre section */}
    <path d="M985 405Q997 396 1011 395Q1030 395 1050 407Q1075 421 1087 430L1080 438L1030 425Z" fill="#559153" />
    <path d="M951 394L1058 426Q1048 434 1044 452L1039 474L1015 460L932 438Q938 400 951 394Z" fill="url(#green)" />
    <path d="M962 397Q952 404 946 427" fill="none" />
    <path d="M918 446Q932 434 951 425Q968 421 990 432Q1015 447 1039 465L1015 480Q975 449 941 442Q925 440 918 446Z" fill="#62995c" />
    <path d="M951 424Q972 421 994 435Q1016 449 1039 465" fill="none" strokeWidth="2" />
    <path d="M1039 465L1030 473L1039 474" fill="none" />
    <path d="M1057 426L1042 460L1039 474L1060 479L1078 434Z" fill="url(#body)" stroke="none" />
    <path d="M1058 426Q1048 434 1044 452L1039 474" fill="none" />

    {/* engine nacelle */}
    <path d="M1146 452Q1143 470 1152 476L1200 490" fill="none" />
    <path
      d="M1154 430Q1170 429 1198 432Q1222 434 1242 442Q1268 450 1283 458Q1271 466 1270 489Q1252 491 1236 488Q1215 484 1196 477Q1165 462 1146 448Q1147 436 1154 430Z"
      fill="url(#nacelle)"
    />
    <path d="M1160 434Q1210 436 1248 452Q1260 458 1262 468M1200 446Q1230 446 1240 462Q1236 474 1215 468" fill="none" stroke="#494a86" strokeWidth="1.5" />
    <circle cx="1248" cy="472" r="1.5" fill="#fff" stroke="none" />
    <path d="M1283 458Q1274 464 1273 488M1283 458Q1291 460 1290 473" fill="none" strokeWidth="2" />
    <path d="M1198 477V509M1196 478L1258 499" fill="none" />

    {/* stabiliser */}
    <path d="M1147 470L1186 482L1260 517L1169 494Z" fill="#c9c8c2" />
    <path d="M1180 480L1260 516" stroke="#5e2f25" strokeWidth="2" fill="none" />

    {/* cone and propeller */}
    <path d="M1331 492L1327 490Q1338 440 1351 421Q1358 422 1356 432Q1346 470 1335 496Z" fill="#c5c0b1" />
    <path d="M1352 424L1333 490" fill="none" strokeWidth="0.8" />
    <path d="M1317 535Q1311 570 1316 580Q1320 586 1324 580Q1329 560 1326 536Z" fill="#a8a69b" />
    <path d="M1320 540V582" fill="none" strokeWidth="0.8" />
    <path d="M1274 472Q1290 470 1304 476Q1317 480 1325 490L1376 518Q1378 526 1381 528L1373 539L1312 536L1283 536L1261 530Q1260 495 1274 472Z" fill="url(#cone)" stroke="none" />
    <path d="M1376 518Q1378 526 1381 528L1373 539Z" fill="#b9b8b3" stroke="none" />
    <path d="M1304 476Q1317 480 1325 490M1274 472Q1261 495 1261 530" fill="none" />
    <path d="M1262 500Q1275 490 1292 500Q1280 515 1283 536M1278 474Q1290 486 1289 534" stroke="#a39d8d" strokeWidth="1" fill="none" />
    <path d="M1284 506L1308 488L1296 530ZM1328 492L1374 522L1340 508Z" fill="#f3efe4" stroke="none" opacity="0.8" />
    <path d="M1304 476Q1286 496 1286 535M1325 490Q1312 496 1312 518M1376 518Q1370 528 1373 539" fill="none" strokeWidth="1.5" />
    <path d="M1313 518Q1318 521 1313 532Q1304 547 1292 550Q1282 551 1284 540Q1287 528 1300 522Z" fill="#bdb9ab" />
    <path d="M1310 520Q1293 528 1289 548M1300 524L1296 548" fill="none" strokeWidth="1" />
  </g>
);

const Scene = () => (
  <svg
    viewBox="0 175 1916 783"
    preserveAspectRatio="xMidYMid slice"
    className="absolute inset-0 h-full w-full"
    role="img"
    aria-label="UAV model on the ground grid"
  >
    <defs>
      <linearGradient id="body" x1="980" y1="400" x2="962" y2="455" gradientUnits="userSpaceOnUse">
        <stop offset="0" stopColor="#4b4c80" />
        <stop offset="0.3" stopColor="#3a3b78" />
        <stop offset="1" stopColor="#282959" />
      </linearGradient>
      <linearGradient id="green" x1="1000" y1="405" x2="985" y2="455" gradientUnits="userSpaceOnUse">
        <stop offset="0" stopColor="#66a262" />
        <stop offset="1" stopColor="#467f47" />
      </linearGradient>
      <linearGradient id="nose" x1="712" y1="345" x2="735" y2="370" gradientUnits="userSpaceOnUse">
        <stop offset="0" stopColor="#cf6157" />
        <stop offset="1" stopColor="#b5483d" />
      </linearGradient>
      <linearGradient id="fin" x1="1270" y1="370" x2="1320" y2="410" gradientUnits="userSpaceOnUse">
        <stop offset="0" stopColor="#40417a" />
        <stop offset="0.5" stopColor="#474874" />
        <stop offset="1" stopColor="#31326a" />
      </linearGradient>
      <linearGradient id="nacelle" x1="1220" y1="432" x2="1205" y2="490" gradientUnits="userSpaceOnUse">
        <stop offset="0" stopColor="#34356f" />
        <stop offset="0.5" stopColor="#3c3d7a" />
        <stop offset="1" stopColor="#1d1e49" />
      </linearGradient>
      <linearGradient id="cone" x1="1320" y1="480" x2="1305" y2="540" gradientUnits="userSpaceOnUse">
        <stop offset="0" stopColor="#e6dcc4" />
        <stop offset="0.5" stopColor="#d8d3c5" />
        <stop offset="0.7" stopColor="#e6e2d8" />
        <stop offset="1" stopColor="#a5a192" />
      </linearGradient>
      <filter id="soft" x="-10%" y="-10%" width="120%" height="120%">
        <feGaussianBlur stdDeviation="4" />
      </filter>
    </defs>

    <rect x="-500" y="-500" width="3000" height="2000" fill="#fefefe" />
    <path d={GRID_MINOR} stroke="#e9e9e9" strokeWidth="1.2" fill="none" />
    <path d={GRID_MAJOR} stroke="#cfcfcf" strokeWidth="1.3" fill="none" />

    <g filter="url(#soft)" fill="#000" fillOpacity="0.2">
      <path d="M430 975L871 598L1019 478L1101 427L1292 322L1325 322L1331 332L1242 410L1180 470L1363 617L1340 616L1250 594L1235 620Q1200 700 1185 703Q1160 710 1137 696Q1156 610 1164 574L1057 536L1080 535L871 686L817 729L500 975Z" />
      <path d="M728 472Q714 478 722 486Q760 498 850 510L860 490Q790 474 728 472Z" />
    </g>

    <path d="M0 757L1190 175" stroke="#ffa0a0" strokeWidth="1.6" />
    <path d="M0 253L1916 666" stroke="#93f793" strokeWidth="1.6" />
    <g stroke="#000" strokeOpacity="0.09" fill="none">
      <circle cx="960" cy="567" r="260" />
      <path d="M960 237V307M960 540V593M933 567H987M960 827V893M654 567H698" />
    </g>
    <ellipse cx="714" cy="407" rx="12" ry="4" fill="#777" fillOpacity="0.5" />
    <path d="M706 411L722 403" stroke="#ff8a8a" strokeWidth="1.5" />
    <Aircraft />
  </svg>
);

const ViewCube = () => (
  <div className="relative h-[110px] w-[100px] font-['Liberation_Sans',sans-serif] text-[15px] leading-[16px]">
    <svg viewBox="0 0 100 100" className="absolute top-[5px] left-0 h-[100px] w-[100px]" role="img" aria-label="View cube">
      <ellipse cx="62" cy="84" rx="26" ry="10" fill="#000" fillOpacity="0.3" filter="url(#soft)" />
      <path d="M10 38L37 26L76 32L54 48Z" fill="#f3f3f3" />
      <path d="M10 38L54 48V95L12 83Z" fill="#ececec" />
      <path d="M54 48L76 32V75L54 95Z" fill="#e2e2e2" />
      <path d="M10 38L37 26L76 32L54 48ZM10 38L12 83L54 95V48M54 95L76 75V32" fill="none" stroke="#8c8c8c" strokeDasharray="5 2" />
      <path d="M37 17V25" stroke="#8080ff" strokeWidth="2" />
      <path d="M6 87L13 83" stroke="#ff7070" strokeWidth="2" />
      <path d="M75 75L82 77" stroke="#6df06d" strokeWidth="2" />
    </svg>
    <span className="absolute top-[9px] left-[31px] font-bold text-[#8080ff]">Z</span>
    <span className="absolute top-[86px] left-[-4px] text-[#ff7070]">X</span>
    <span className="absolute top-[76px] left-[82px] text-[#6df06d]">Y</span>
    <span className="absolute top-[63px] left-[15px] rotate-[10deg] text-[11px] font-bold text-[#80848a]">RIGHT</span>
    <span className="absolute top-[60px] left-[56px] -rotate-[42deg] text-[7px] font-bold text-[#80848a]">BACK</span>
    <span className="absolute top-[34px] left-[37px] -rotate-[24deg] text-[7px] font-bold text-[#80848a]">TOP</span>
  </div>
);

/* ---------- timeline ---------- */

const FEATURES: Record<string, { label: string; icon: Icon }> = {
  s: { label: 'Sketch', icon: SketchPencilIcon },
  p: { label: 'Patch', icon: PatchIcon },
  i: { label: 'Intersect', icon: IntersectIcon },
  d: { label: 'Split Body', icon: SplitIcon },
  e: { label: 'Extrude', icon: ExtrudeIcon },
  a: { label: 'Align', icon: AlignIcon },
  c: { label: 'Combine', icon: CombineIcon },
  m: { label: 'Move', icon: MoveIcon },
  r: { label: 'Remove', icon: RemoveIcon },
  f: { label: 'Fillet', icon: FilletIcon },
  o: { label: 'Offset Plane', icon: PlaneIcon },
};

// upper case marks a feature that carries a warning
const HISTORY = 'SsSSsspiddeacsddsssPSsPpeeEdmmdasmrmsssspecffffmmcsossse'.split('');

const PLAYBACK = [
  { label: 'Go to start', d: 'M2 1V17M16 1V17L5 9Z', bar: true },
  { label: 'Step back', d: 'M12 2V16L1 9ZM15 6V12', bar: true },
  { label: 'Play', d: 'M2 0V18L17 9Z', bar: false },
  { label: 'Step forward', d: 'M6 2V16L17 9ZM3 6V12', bar: true },
  { label: 'Go to end', d: 'M2 1V17L13 9ZM16 1V17', bar: true },
];

const Timeline = () => (
  <footer className="flex h-[57px] shrink-0 bg-[#f4f4f4]">
    <div className="flex w-[171px] shrink-0 items-center gap-[12px] pt-[14px] pl-[11px] text-[#6f6f6f]">
      {PLAYBACK.map((item) => (
        <button key={item.label} aria-label={item.label}>
          <svg viewBox="0 0 18 18" className="h-[19px] w-[19px]">
            <path d={item.d} fill="currentColor" stroke={item.bar ? 'currentColor' : 'none'} strokeWidth="1.8" />
          </svg>
        </button>
      ))}
    </div>
    <div className="relative flex-1 pt-[10px]">
      <div className="flex h-[7px] pl-[9px]">
        <div className="w-[1405px] bg-[#e38fe3]" />
        <div className="ml-[5px] w-[13px] bg-[#e38fe3]" />
        <div className="w-[12px] bg-[#66dfe3]" />
        <div className="ml-[5px] w-[235px] bg-[#e38fe3]" />
      </div>
      <div className="-mt-[2px] flex pl-[7px]">
        {HISTORY.map((code, i) => {
          const { label, icon: FeatureIcon } = FEATURES[code.toLowerCase()];
          return (
            <button key={i} aria-label={label} className="flex w-[30px] flex-col items-center">
              <span
                className={clsx(
                  'flex h-[30px] w-[29px] items-center justify-center rounded-[2px]',
                  code !== code.toLowerCase() && 'bg-[#f7d29b]',
                )}
              >
                <FeatureIcon className="h-[20px] w-[20px]" />
              </span>
              <span className="h-[5px] w-[2px] bg-[#c4c4c4]" />
            </button>
          );
        })}
      </div>
      <div className="flex gap-[3px]">
        <div className="h-[2px] w-[4px] bg-[#c4c4c4]" />
        <div className="h-[2px] w-[4px] bg-[#c4c4c4]" />
        <div className="h-[2px] w-[1660px] bg-[#c4c4c4]" />
      </div>
      <svg viewBox="0 0 14 40" className="absolute top-[12px] left-[1679px] h-[40px] w-[14px]" aria-hidden="true">
        <path d="M0 0H14V6L9 10V40H6V10L0 6Z" fill="#3d3d3d" />
      </svg>
    </div>
    <div className="flex w-[38px] flex-col items-center pr-[4px]">
      <div className="mt-[1px] h-[7px] w-[29px] rounded-[3px] bg-[#dcdcdc]" />
      <button aria-label="Timeline settings" className="mt-[18px]">
        <Svg className="h-[20px] w-[20px]" size={20}>
          <circle cx="10" cy="10" r="5.5" stroke="#7d7d7d" strokeWidth="4" />
          <circle cx="10" cy="10" r="8.5" stroke="#7d7d7d" strokeWidth="3" strokeDasharray="4.5 4.4" strokeDashoffset="2" />
        </Svg>
      </button>
    </div>
  </footer>
);

export default function App() {
  return (
    <div className="flex h-screen flex-col overflow-hidden font-['Noto_Sans',sans-serif]">
      <TitleBar />
      <DocumentBar />
      <Ribbon />
      <main className="relative min-h-0 flex-1 overflow-hidden">
        <Scene />
        <div className="absolute inset-0 flex pt-[5px] pb-[5px] pl-[5px]">
          <BrowserPanel />
        </div>
        <div className="absolute top-[1px] right-[4px]">
          <ViewCube />
        </div>
        <div className="absolute inset-x-0 bottom-[8px] flex justify-center pl-[4px]">
          <NavigationBar />
        </div>
        <button aria-label="Assistant" className="absolute right-[12px] bottom-[10px]">
          <Svg className="h-[19px] w-[18px]" size={18}>
            <path d="M9 0A9 9 0 0 1 18 9V18H9A9 9 0 0 1 9 0Z" fill="#000" />
            <path d="M3 11L11 5M5 13L14 6M8 14L14 10" stroke="#fff" strokeWidth="1.4" />
          </Svg>
        </button>
      </main>
      <Timeline />
    </div>
  );
}
